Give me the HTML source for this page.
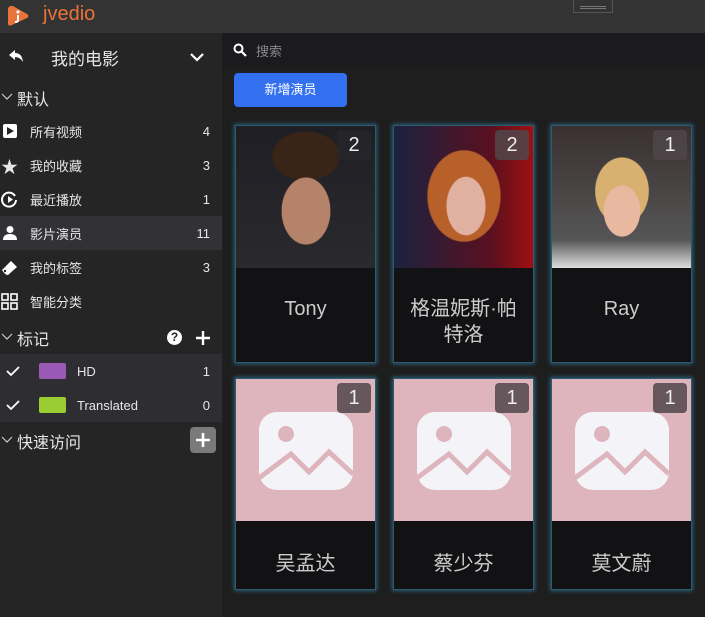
<!DOCTYPE html><html><head><meta charset="utf-8"><style>
*{margin:0;padding:0;box-sizing:border-box}
body{width:705px;height:617px;background:#1e1e1e;font-family:"Liberation Sans","Noto Sans CJK SC",sans-serif;color:#e6e6e6;position:relative;overflow:hidden}
.top{position:absolute;left:0;top:0;width:705px;height:33px;background:#333}
.side{position:absolute;left:0;top:33px;width:222px;height:584px;background:#252526}
.row{position:absolute;left:0;width:222px;height:34px;font-size:13px;display:flex;align-items:center}
.row .t{position:absolute;left:30px}
.row .n{position:absolute;right:12px}
.hd{position:absolute;left:0;font-size:16px}
.hd span{position:absolute;left:17px;top:0;white-space:nowrap}
.hd svg{position:absolute;left:1px;top:7px}
.search{position:absolute;left:222px;top:33px;width:483px;height:34px;background:#1b1b1f}
.btn{position:absolute;left:234px;top:73px;width:113px;height:34px;background:#3370f0;border-radius:4px;color:#fff;font-size:13px;text-align:center;line-height:34px}
.card{position:absolute;width:141px;background:#121214;box-shadow:0 0 4px 1px #2a5f78;border:1px solid #2e5a70}
.card .img{position:absolute;left:0;top:0;width:139px;height:142px;overflow:hidden}
.card .nm{position:absolute;left:0;width:139px;text-align:center;color:#ccc;font-size:20px;line-height:26px}
.badge{position:absolute;right:4px;top:4px;width:34px;height:30px;border-radius:4px;background:rgba(80,70,75,.85);color:#eee;font-size:20px;text-align:center;line-height:30px}
.ph{background:#dfb5bd}
</style></head><body>
<div class="top">
<svg style="position:absolute;left:6px;top:4px" width="24" height="24" viewBox="0 0 24 24"><path d="M5 2 Q2 2 2 6 V19 Q2 23 6 21 L21 14 Q24 12 21 10 L7 2Z" fill="#e8743b"/><circle cx="12" cy="8" r="1.6" fill="#fff"/><path d="M12 11 V16 Q12 18 9 18" stroke="#fff" stroke-width="2" fill="none"/></svg>
<div style="position:absolute;left:43px;top:3px;font-size:20px;color:#e8743b">jvedio</div>
<div style="position:absolute;left:573px;top:-1px;width:40px;height:14px;border:1px solid #555"><div style="margin:6px 6px 0;height:3px;border-top:1px solid #777;border-bottom:1px solid #777"></div></div>
</div>
<div class="side">
<svg style="position:absolute;left:8px;top:15px" width="16" height="16" viewBox="0 0 16 16"><path d="M1 7 L7 2 V5 Q14 5 15 14 Q12 9 7 9 V12Z" fill="#fff"/></svg>
<div style="position:absolute;left:51px;top:12px;font-size:17px">我的电影</div>
<svg style="position:absolute;left:189px;top:18px" width="16" height="12"><path d="M2 3 L8 9 L14 3" stroke="#fff" stroke-width="2.2" fill="none"/></svg>
<div class="hd" style="top:53px"><svg width="12" height="8"><path d="M1 1 L6 6 L11 1" stroke="#ccc" stroke-width="1.2" fill="none"/></svg><span>默认</span></div>
<div class="row" style="top:81px"><svg style="position:absolute;left:2px" width="16" height="16"><rect x="1" y="1" width="14" height="14" rx="2" fill="#fff"/><path d="M5 4 L12 8 L5 12Z" fill="#252526"/></svg><span class="t">所有视频</span><span class="n">4</span></div>
<div class="row" style="top:115px"><span style="position:absolute;left:1px;font-size:17px">★</span><span class="t">我的收藏</span><span class="n">3</span></div>
<div class="row" style="top:149px"><svg style="position:absolute;left:1px" width="17" height="17"><path d="M14 5 A7 7 0 1 0 15 9" stroke="#fff" stroke-width="2" fill="none"/><path d="M7 5 L12 8.5 L7 12Z" fill="#fff"/></svg><span class="t">最近播放</span><span class="n">1</span></div>
<div class="row" style="top:183px;background:#323236"><svg style="position:absolute;left:3px" width="14" height="16"><circle cx="7" cy="4.5" r="3.5" fill="#fff"/><path d="M0 15 Q0 9 7 9 Q14 9 14 15Z" fill="#fff"/></svg><span class="t">影片演员</span><span class="n">11</span></div>
<div class="row" style="top:217px"><svg style="position:absolute;left:1px" width="17" height="17"><path d="M1 11 L10 2 L16 8 L7 16 Q4 16 1 11Z" fill="#fff"/><circle cx="4" cy="12" r="1.2" fill="#252526"/></svg><span class="t">我的标签</span><span class="n">3</span></div>
<div class="row" style="top:251px"><svg style="position:absolute;left:1px" width="17" height="17" fill="none" stroke="#fff" stroke-width="1.6"><rect x="1" y="1" width="6" height="6"/><rect x="10" y="1" width="6" height="6"/><rect x="1" y="10" width="6" height="6"/><rect x="10" y="10" width="6" height="6"/></svg><span class="t">智能分类</span></div>
<div class="hd" style="top:293px"><svg width="12" height="8"><path d="M1 1 L6 6 L11 1" stroke="#ccc" stroke-width="1.2" fill="none"/></svg><span>标记</span></div>
<div style="position:absolute;left:167px;top:297px;width:15px;height:15px;border-radius:50%;background:#fff;color:#252526;font-size:12px;font-weight:bold;text-align:center;line-height:15px">?</div>
<svg style="position:absolute;left:195px;top:297px" width="16" height="16"><path d="M8 1 V15 M1 8 H15" stroke="#fff" stroke-width="2.4"/></svg>
<div class="row" style="top:321px;background:#2e2e32"><svg style="position:absolute;left:6px" width="14" height="12"><path d="M1 6 L5 10 L13 2" stroke="#fff" stroke-width="1.8" fill="none"/></svg><div style="position:absolute;left:39px;width:27px;height:16px;background:#9b59b6;border-radius:2px"></div><span style="position:absolute;left:77px">HD</span><span class="n">1</span></div>
<div class="row" style="top:355px;background:#2e2e32"><svg style="position:absolute;left:6px" width="14" height="12"><path d="M1 6 L5 10 L13 2" stroke="#fff" stroke-width="1.8" fill="none"/></svg><div style="position:absolute;left:39px;width:27px;height:16px;background:#9acd32;border-radius:2px"></div><span style="position:absolute;left:77px">Translated</span><span class="n">0</span></div>
<div class="hd" style="top:396px"><svg width="12" height="8"><path d="M1 1 L6 6 L11 1" stroke="#ccc" stroke-width="1.2" fill="none"/></svg><span>快速访问</span></div>
<div style="position:absolute;left:190px;top:394px;width:26px;height:26px;border-radius:4px;background:#7a7a7a"><svg style="position:absolute;left:5px;top:5px" width="16" height="16"><path d="M8 1 V15 M1 8 H15" stroke="#fff" stroke-width="2.6"/></svg></div>
</div>
<div class="search"><svg style="position:absolute;left:11px;top:10px" width="14" height="14"><circle cx="5.5" cy="5.5" r="4" stroke="#fff" stroke-width="2" fill="none"/><path d="M8.5 8.5 L13 13" stroke="#fff" stroke-width="2.2"/></svg><span style="position:absolute;left:34px;top:8px;font-size:13px;color:#888">搜索</span></div>
<div class="btn">新增演员</div>

<div class="card" style="left:235px;top:125px;height:238px"><div class="img" style="background:radial-gradient(ellipse 40px 55px at 70px 85px,#b5826a 60%,transparent 62%),radial-gradient(ellipse 55px 40px at 70px 30px,#3a2418 60%,transparent 62%),linear-gradient(#1e1e24,#2a2a2e)"></div><div class="badge" style="background:rgba(40,40,45,.6)">2</div><div class="nm" style="top:170px">Tony</div></div>
<div class="card" style="left:393px;top:125px;height:238px"><div class="img" style="background:radial-gradient(ellipse 32px 48px at 72px 80px,#e0b0a0 60%,transparent 62%),radial-gradient(ellipse 60px 75px at 70px 70px,#b8602a 60%,transparent 62%),linear-gradient(90deg,#1a2240,#5a1020 70%,#a01010)"></div><div class="badge">2</div><div class="nm" style="top:170px">格温妮斯·帕<br>特洛</div></div>
<div class="card" style="left:551px;top:125px;height:238px"><div class="img" style="background:radial-gradient(ellipse 30px 42px at 70px 85px,#e8b8a0 60%,transparent 62%),radial-gradient(ellipse 44px 55px at 70px 65px,#d8b070 60%,transparent 62%),linear-gradient(#3a3030,#555 80%,#ddd)"></div><div class="badge">1</div><div class="nm" style="top:170px">Ray</div></div>

<div class="card" style="left:235px;top:378px;height:212px"><div class="img ph"><svg style="position:absolute;left:23px;top:33px" width="94" height="80" viewBox="0 0 94 80"><rect width="94" height="78" rx="18" fill="#f4f4f8"/><circle cx="27" cy="22" r="8" fill="#dfb5bd"/><path d="M0 66 L32 42 L50 60 L70 40 L94 62" stroke="#dfb5bd" stroke-width="5" fill="none"/></svg></div><div class="badge">1</div><div class="nm" style="top:172px">吴孟达</div></div>
<div class="card" style="left:393px;top:378px;height:212px"><div class="img ph"><svg style="position:absolute;left:23px;top:33px" width="94" height="80" viewBox="0 0 94 80"><rect width="94" height="78" rx="18" fill="#f4f4f8"/><circle cx="27" cy="22" r="8" fill="#dfb5bd"/><path d="M0 66 L32 42 L50 60 L70 40 L94 62" stroke="#dfb5bd" stroke-width="5" fill="none"/></svg></div><div class="badge">1</div><div class="nm" style="top:172px">蔡少芬</div></div>
<div class="card" style="left:551px;top:378px;height:212px"><div class="img ph"><svg style="position:absolute;left:23px;top:33px" width="94" height="80" viewBox="0 0 94 80"><rect width="94" height="78" rx="18" fill="#f4f4f8"/><circle cx="27" cy="22" r="8" fill="#dfb5bd"/><path d="M0 66 L32 42 L50 60 L70 40 L94 62" stroke="#dfb5bd" stroke-width="5" fill="none"/></svg></div><div class="badge">1</div><div class="nm" style="top:172px">莫文蔚</div></div>
</body></html>
